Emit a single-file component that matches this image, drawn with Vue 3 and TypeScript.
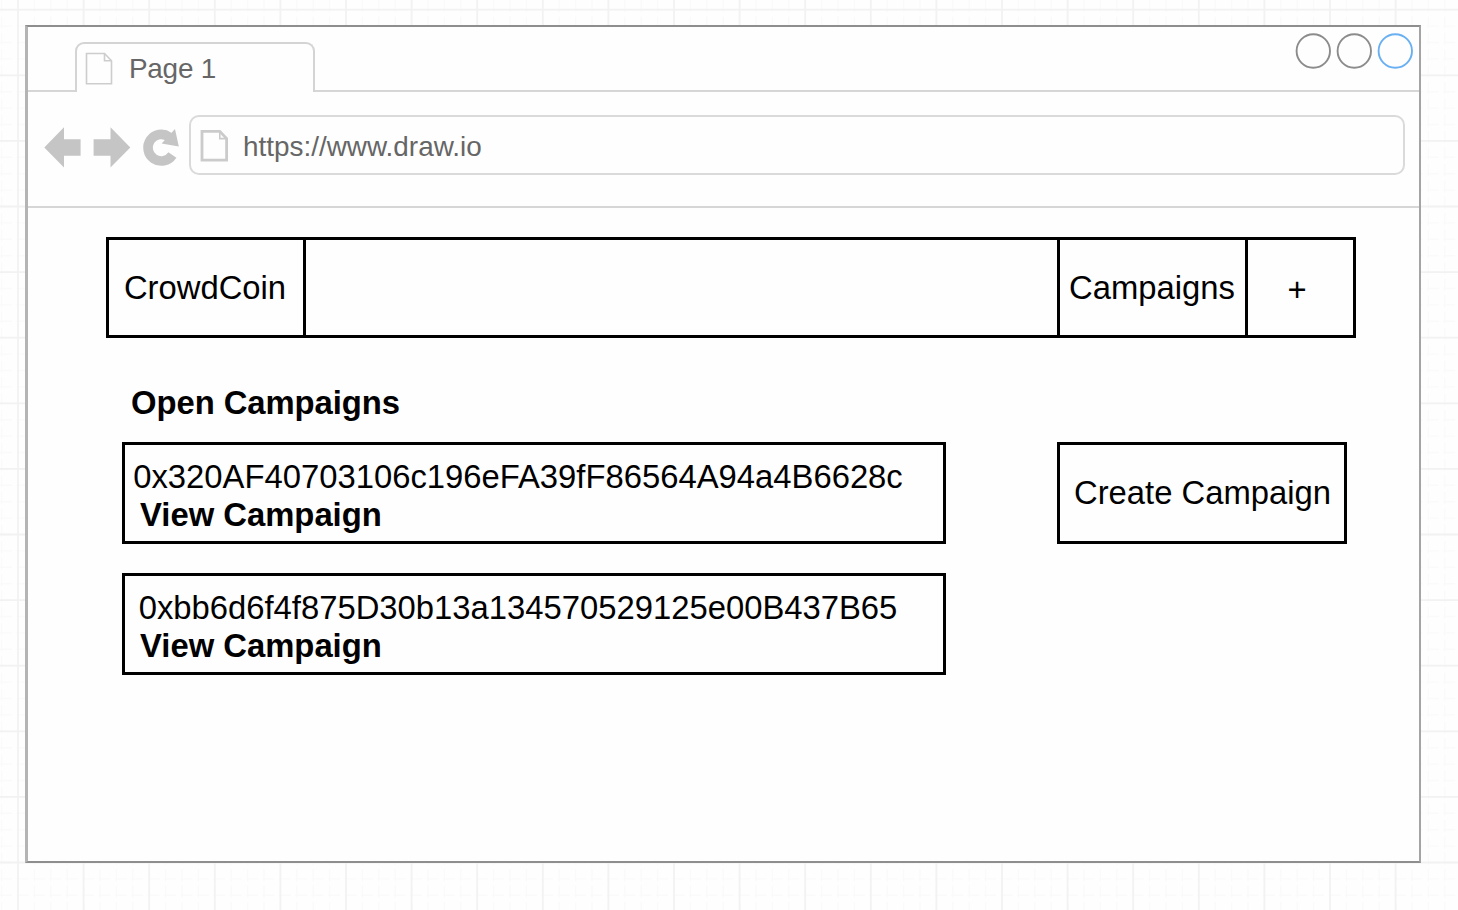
<script setup lang="ts">
interface Campaign {
  address: string
}

const campaigns: Campaign[] = [
  { address: '0x320AF40703106c196eFA39fF86564A94a4B6628c' },
  { address: '0xbb6d6f4f875D30b13a134570529125e00B437B65' },
]

const STEP = 16.4
const range = (start: number, end: number, step: number): number[] => {
  const out: number[] = []
  for (let v = start; v < end; v += step) out.push(v)
  return out
}
const minorX = range(18 - STEP, 1458, STEP)
const minorY = range(9.7, 910, STEP)
const majorX = range(18, 1458, STEP * 4)
const majorY = range(9.7, 910, STEP * 4)
</script>

<template>
  <div class="canvas">
    <svg class="grid" width="1458" height="910" viewBox="0 0 1458 910" aria-hidden="true">
      <g stroke="#fafafa" stroke-width="1.4" stroke-dasharray="12 4.4">
        <line v-for="x in minorX" :key="'a' + x" :x1="x" y1="0" :x2="x" y2="910" />
        <line v-for="y in minorY" :key="'b' + y" x1="0" :y1="y" x2="1458" :y2="y" />
      </g>
      <g stroke="#f2f2f2" stroke-width="1.8">
        <line v-for="x in majorX" :key="'c' + x" :x1="x" y1="0" :x2="x" y2="910" />
        <line v-for="y in majorY" :key="'d' + y" x1="0" :y1="y" x2="1458" :y2="y" />
      </g>
    </svg>

    <div class="window">
      <div class="tabs">
        <div class="tab-lead"></div>
        <div class="tab">
          <svg class="tab-icon" width="28" height="34" viewBox="0 0 28 34" fill="none" stroke="#cdcdcd" stroke-width="1.6">
            <path d="M1.5 1.5H19.5L26.5 8.8V31.8H1.5Z" />
            <path d="M19.5 1.5V8.8H26.5" />
          </svg>
          <span class="tab-title">Page 1</span>
        </div>
        <div class="tab-rest">
          <svg width="120" height="38" viewBox="0 0 120 38" fill="none" stroke-width="1.9">
            <circle cx="19.3" cy="19" r="16.7" stroke="#8c8c8c" />
            <circle cx="60.3" cy="19" r="16.7" stroke="#8c8c8c" />
            <circle cx="101.3" cy="19" r="16.7" stroke="#69b0f3" />
          </svg>
        </div>
      </div>

      <div class="toolbar">
        <svg class="nav-icons" width="140" height="44" viewBox="0 0 140 44">
          <path d="M.3 22.5L20 2.3V14.3H36.6V30.7H20V42.5Z" fill="#c5c5c5" />
          <path d="M86.3 22.5L66.5 2.3V14.3H49.6V30.7H66.5V42.5Z" fill="#c5c5c5" />
          <path d="M125 11.8A13.3 13.3 0 1 0 128.4 30" fill="none" stroke="#c5c5c5" stroke-width="9.6" />
          <path d="M131 4L134.8 21.6L117.6 18.4Z" fill="#c5c5c5" />
        </svg>
        <div class="url">
          <svg width="30" height="34" viewBox="0 0 30 34" fill="none" stroke="#cbcbcb">
            <path d="M2 2.4H19.8L26.6 9.6V31.1H2Z" stroke-width="2.8" />
            <path d="M19.8 2.4V9.6H26.6" stroke-width="1.6" />
          </svg>
          <span class="url-text">https://www.draw.io</span>
        </div>
      </div>

      <div class="page">
        <nav class="menu">
          <div class="brand">CrowdCoin</div>
          <div class="filler"></div>
          <div class="link">Campaigns</div>
          <div class="plus">+</div>
        </nav>
        <h1 class="heading">Open Campaigns</h1>
        <div class="content">
          <div class="list">
            <div v-for="c in campaigns" :key="c.address" class="card">
              <div class="address">{{ c.address }}</div>
              <div class="view">View Campaign</div>
            </div>
          </div>
          <div class="create">Create Campaign</div>
        </div>
      </div>
    </div>
  </div>
</template>

<style>
body {
  margin: 0;
  background: #fefefe;
}
</style>

<style scoped>
.canvas {
  position: relative;
  box-sizing: border-box;
  width: 1458px;
  height: 910px;
  padding: 25px 0 0 25px;
  overflow: hidden;
  font-family: "Liberation Sans", Arial, sans-serif;
  font-size: 32.8px;
  line-height: 38px;
  color: #000;
  white-space: nowrap;
}
.canvas * {
  box-sizing: border-box;
}
.grid {
  position: absolute;
  inset: 0;
}
svg {
  display: block;
  flex: none;
}
.window {
  position: relative;
  width: 1396px;
  height: 838px;
  background: #fefefe;
  border: 2px solid #8e8e8e;
  border-left: 3px solid #b4b4b4;
  border-right: 2px solid #a4a4a4;
}
.tabs {
  display: flex;
  height: 65px;
}
.tab-lead {
  width: 47px;
  border-bottom: 2px solid #d6d6d6;
}
.tab {
  display: flex;
  width: 240px;
  height: 50px;
  margin-top: 15px;
  border: 2px solid #d4d4d4;
  border-bottom: 0;
  border-radius: 9px 9px 0 0;
}
.tab-icon {
  margin: 8px 0 0 8px;
}
.tab-title {
  margin: 6px 0 0 16px;
  font-size: 27.9px;
  letter-spacing: -0.25px;
  color: #666;
}
.tab-rest {
  flex: 1;
  display: flex;
  justify-content: flex-end;
  padding-top: 5px;
  padding-right: 5px;
  border-bottom: 2px solid #d6d6d6;
}
.toolbar {
  display: flex;
  height: 116px;
  padding: 23px 14px 0 16px;
  border-bottom: 2px solid #d6d6d6;
}
.nav-icons {
  margin-top: 10px;
}
.url {
  flex: 1;
  display: flex;
  height: 60px;
  margin-left: 5px;
  padding: 12px 0 0 9px;
  border: 2px solid #dadada;
  border-radius: 10px;
}
.url-text {
  margin: 1px 0 0 13px;
  font-size: 27.9px;
  line-height: 34px;
  color: #666;
}
.page {
  padding: 29px 64px 0 78px;
}
.menu {
  display: flex;
  width: 1250px;
  height: 101px;
  border: 3px solid #000;
  line-height: 95px;
  text-align: center;
}
.brand {
  width: 197px;
  padding-right: 2px;
  border-right: 3px solid #000;
}
.filler {
  flex: 1;
}
.link {
  width: 191px;
  padding-right: 1px;
  border: 0 solid #000;
  border-width: 0 3px;
}
.plus {
  width: 105px;
  padding: 2px 7px 0 0;
}
.heading {
  margin: 46px 0 0 25px;
  font-size: 32.8px;
  line-height: 38px;
  font-weight: 700;
  letter-spacing: -0.05px;
}
.content {
  display: flex;
  align-items: flex-start;
  gap: 111px;
  margin: 20px 0 0 16px;
}
.list {
  display: grid;
  gap: 29px;
}
.card {
  width: 824px;
  height: 102px;
  padding: 13px 32px 0 0;
  border: 3px solid #000;
}
.address {
  text-align: center;
}
.view {
  padding-left: 15px;
  font-weight: 700;
}
.create {
  width: 290px;
  height: 102px;
  padding-left: 1px;
  border: 3px solid #000;
  line-height: 96px;
  text-align: center;
}
</style>
